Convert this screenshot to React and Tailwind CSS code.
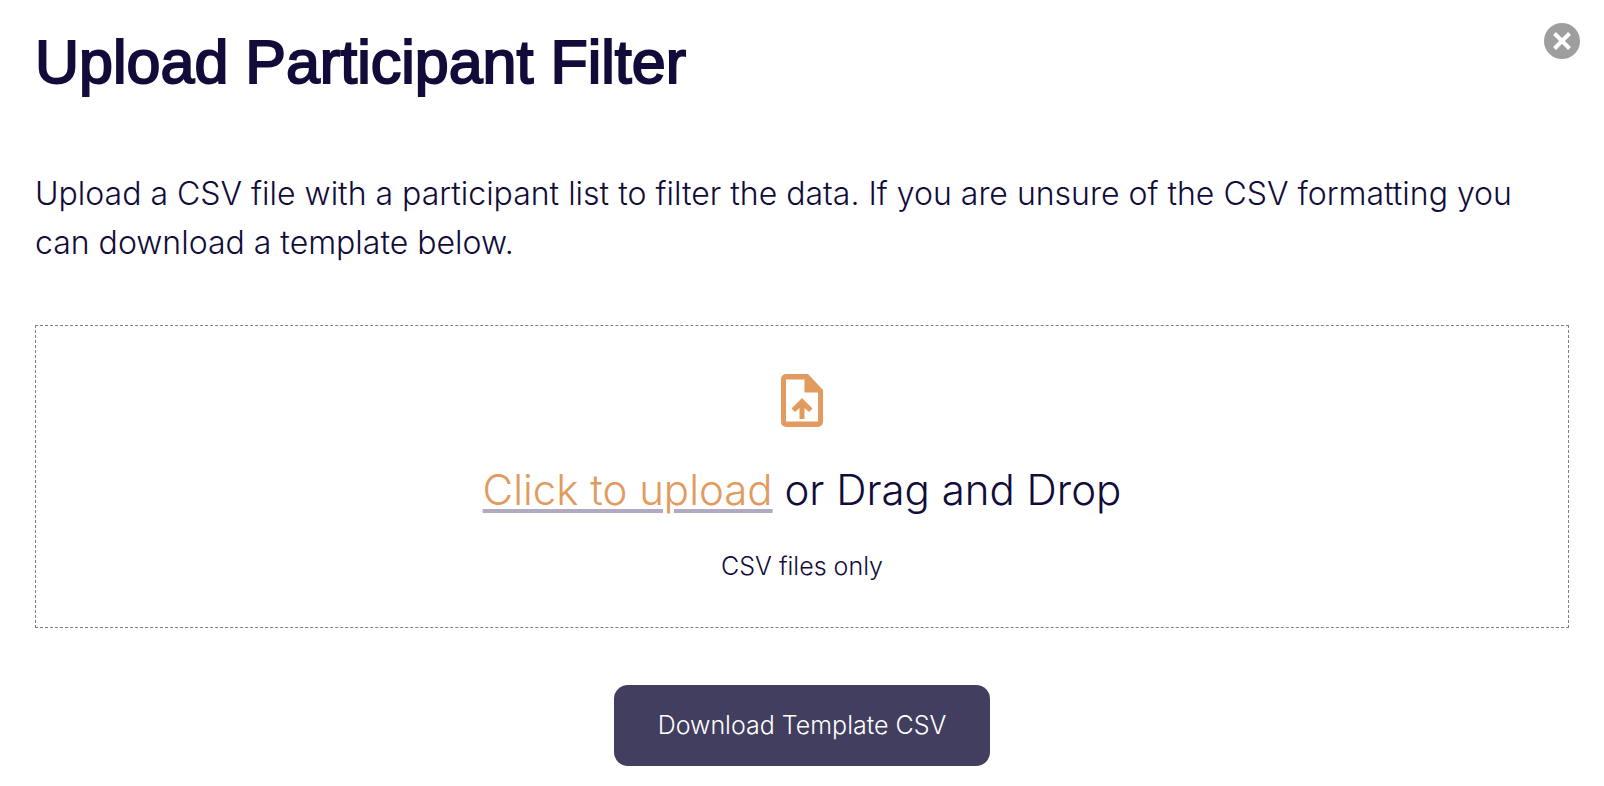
function CloseIcon() {
  return (
    <svg viewBox="0 0 36 36" className="size-9" aria-hidden="true">
      <circle cx="18" cy="18" r="18" fill="#9e9e9e" />
      <path d="M10.5 10.5l15 15M25.5 10.5l-15 15" stroke="#fff" strokeWidth="4" />
    </svg>
  );
}

function UploadFileIcon() {
  return (
    <svg viewBox="0 0 42 53" className="h-[53px] w-[42px]" fill="#e29a5e" aria-hidden="true">
      <path
        fillRule="evenodd"
        d="M5 0H27L42 16V48a5 5 0 0 1-5 5H5a5 5 0 0 1-5-5V5a5 5 0 0 1 5-5ZM5 5.5V47.5H37V18.5H23.5V5.5Z"
      />
      <path d="M21 24L31.5 34.5L28 38L23.5 34V45H18.5V34L14 38L10.5 34.5Z" />
    </svg>
  );
}

export default function App() {
  return (
    <main
      role="dialog"
      aria-labelledby="title"
      className="bg-white pt-[23px] pb-5 pl-[35px] font-['Inter',sans-serif] font-[330] text-[#120c3a]"
    >
      <header className="flex items-start justify-between pr-6">
        <h1
          id="title"
          className="pt-[3px] font-['Liberation_Sans',Arial,sans-serif] text-[61px] leading-[72px] font-normal [-webkit-text-stroke:2px_#120c3a]"
        >
          Upload Participant Filter
        </h1>
        <button type="button" aria-label="Close" className="rounded-full">
          <CloseIcon />
        </button>
      </header>

      <div className="pr-[35px]">
        <p className="mt-[71px] pr-4 text-[32px] leading-[49px]">
          Upload a CSV file with a participant list to filter the data. If you are unsure of the CSV formatting you
          can download a template below.
        </p>

        <section className="mt-[58px] flex flex-col items-center border border-dashed border-[#808080] pt-12 pb-[43px]">
          <UploadFileIcon />
          <p className="mt-8 text-[42px] leading-[62px]">
            <button
              type="button"
              className="cursor-pointer text-[#e29a5e] underline decoration-[#b0aac2] decoration-4 underline-offset-4"
            >
              Click to upload
            </button>{" "}
            or Drag and Drop
          </p>
          <p className="mt-[27px] text-[25px] leading-[36px]">CSV files only</p>
        </section>

        <div className="mt-[57px] flex justify-center">
          <button type="button" className="rounded-[14px] bg-[#413e5f] px-11 py-[22px] text-[25px] leading-[37px] text-white">
            Download Template CSV
          </button>
        </div>
      </div>
    </main>
  );
}
